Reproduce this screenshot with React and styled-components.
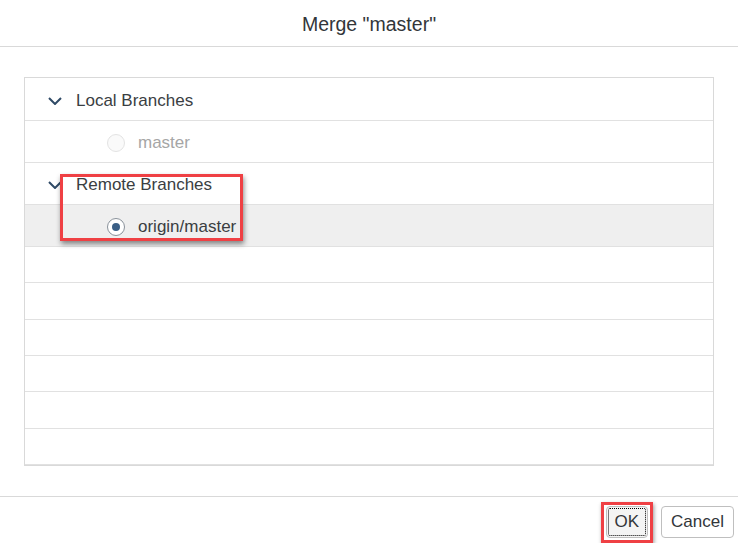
import React from 'react';
import styled, {createGlobalStyle} from 'styled-components';

const GlobalStyle = createGlobalStyle`
  html, body, #root {
    margin: 0;
    height: 100%;
  }
  body {
    font-family: "Liberation Sans", Arial, sans-serif;
    color: #32363a;
    background: #ffffff;
  }
`

const Dialog = styled.div`
  height: 100vh;
  display: flex;
  flex-direction: column;
  box-sizing: border-box;
`

const Header = styled.div`
  height: 47px;
  box-sizing: border-box;
  border-bottom: 1px solid #d9d9d9;
  display: flex;
  align-items: center;
  justify-content: center;
  font-size: 19.5px;
  color: #32363a;
  padding-top: 2px;
`

const Body = styled.div`
  flex: 1;
  padding: 30px 24px 30px 24px;
  display: flex;
  flex-direction: column;
  min-height: 0;
`

const Tree = styled.div`
  flex: 1;
  position: relative;
  border: 1px solid #d9d9d9;
  padding-top: 1px;
  display: flex;
  flex-direction: column;
`

const Row = styled.div`
  height: ${props => props.$empty ? 'auto' : '42px'};
  flex: ${props => props.$empty ? 1 : '0 0 auto'};
  box-sizing: border-box;
  border-bottom: 1px solid #e1e1e1;
  background: ${props => props.$selected ? '#efefef' : '#ffffff'};
  display: flex;
  align-items: center;
  padding-top: 2px;
  padding-left: ${props => props.$level === 2 ? '82px' : '23px'};
  font-size: 17px;
  &:last-of-type {
    border-bottom: none;
  }
`

const Chevron = styled.svg`
  width: 14px;
  height: 8px;
  margin-right: 14px;
  flex-shrink: 0;
`

const Label = styled.span`
  color: ${props => props.$disabled ? '#a6a6a6' : '#3a3e42'};
`

const Radio = styled.span`
  width: 18px;
  height: 18px;
  box-sizing: border-box;
  border-radius: 50%;
  border: 1.5px solid ${props => props.$disabled ? '#e3e3e3' : '#89919a'};
  background: ${props => props.$disabled ? '#fafafa' : '#ffffff'};
  margin-right: 13px;
  display: flex;
  align-items: center;
  justify-content: center;
  &::after {
    content: '';
    width: 8px;
    height: 8px;
    border-radius: 50%;
    background: ${props => props.$checked ? '#3b5f86' : 'transparent'};
  }
`

const Highlight = styled.div`
  position: absolute;
  left: 35px;
  top: 96px;
  width: 183px;
  height: 67px;
  box-sizing: border-box;
  border: 3px solid #ef4044;
  box-shadow: 1px 3px 5px rgba(0, 0, 0, 0.45);
  pointer-events: none;
`

const Footer = styled.div`
  height: 47px;
  box-sizing: border-box;
  border-top: 1px solid #d9d9d9;
  display: flex;
  justify-content: flex-end;
  align-items: flex-start;
  padding: 5px 4px 0 0;
  gap: 8px;
`

const Marked = styled.div`
  border: 3px solid #ef4044;
  padding: 1px 2px 2px 2px;
  box-shadow: 1px 2px 4px rgba(0, 0, 0, 0.4);
`

const Button = styled.button`
  height: 32px;
  padding: 0 ${props => props.$focus ? '8px' : '9px'};
  margin-top: ${props => props.$focus ? '0' : '4px'};
  font-family: "Liberation Sans", Arial, sans-serif;
  font-size: 17px;
  color: #32363a;
  background: ${props => props.$focus ? '#f4f4f4' : '#ffffff'};
  border: 1px solid #bfbfbf;
  border-radius: 4px;
  outline: ${props => props.$focus ? '1px dotted #000000' : 'none'};
  outline-offset: -3px;
`

const ChevronIcon = () => (
    <Chevron viewBox="0 0 14 8">
        <polyline points="1,1 7,7 13,1" fill="none" stroke="#2f4a66" strokeWidth="2"/>
    </Chevron>
)

export default function App() {
    return (
        <Dialog>
            <GlobalStyle/>
            <Header>Merge "master"</Header>
            <Body>
                <Tree>
                    <Row>
                        <ChevronIcon/>
                        <Label>Local Branches</Label>
                    </Row>
                    <Row $level={2}>
                        <Radio $disabled/>
                        <Label $disabled>master</Label>
                    </Row>
                    <Row>
                        <ChevronIcon/>
                        <Label>Remote Branches</Label>
                    </Row>
                    <Row $level={2} $selected>
                        <Radio $checked/>
                        <Label>origin/master</Label>
                    </Row>
                    <Row $empty/>
                    <Row $empty/>
                    <Row $empty/>
                    <Row $empty/>
                    <Row $empty/>
                    <Row $empty/>
                    <Highlight/>
                </Tree>
            </Body>
            <Footer>
                <Marked>
                    <Button $focus>OK</Button>
                </Marked>
                <Button>Cancel</Button>
            </Footer>
        </Dialog>
    )
}
